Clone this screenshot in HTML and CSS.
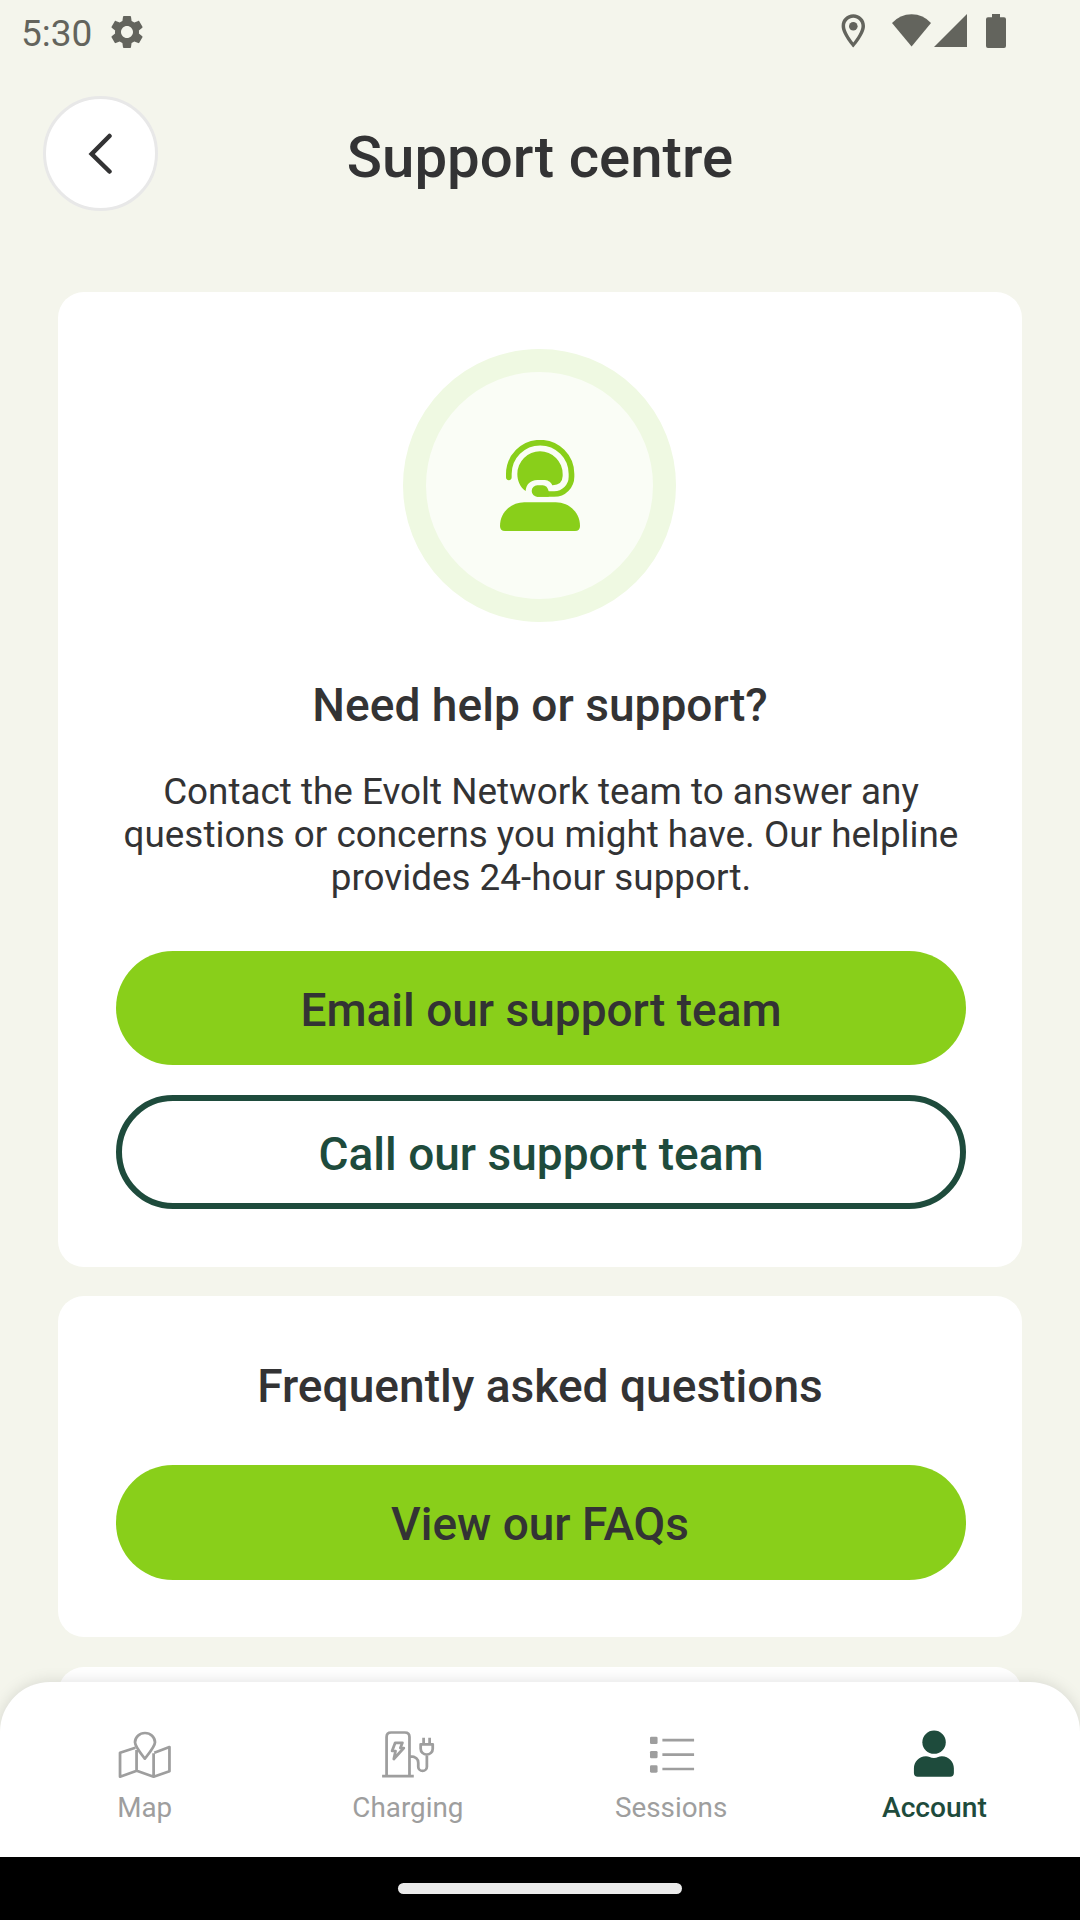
FILE: index.html
```html
<!DOCTYPE html>
<html lang="en">
<head>
<meta charset="utf-8">
<title>Support centre</title>
<link rel="stylesheet" href="styles.css">
</head>
<body>
<div class="status">
  <span class="clock">5:30</span>
  <svg class="gear" viewBox="0 0 24 24"><path d="M19.14 12.94c.04-.3.06-.61.06-.94 0-.32-.02-.64-.07-.94l2.03-1.58c.18-.14.23-.41.12-.61l-1.92-3.32c-.12-.22-.37-.29-.59-.22l-2.39.96c-.5-.38-1.03-.7-1.62-.94l-.36-2.54c-.04-.24-.24-.41-.48-.41h-3.84c-.24 0-.43.17-.47.41l-.36 2.54c-.59.24-1.13.57-1.62.94l-2.39-.96c-.22-.08-.47 0-.59.22L2.74 8.87c-.12.21-.08.47.12.61l2.03 1.58c-.05.3-.09.63-.09.94s.02.64.07.94l-2.03 1.58c-.18.14-.23.41-.12.61l1.92 3.32c.12.22.37.29.59.22l2.39-.96c.5.38 1.03.7 1.62.94l.36 2.54c.05.24.24.41.48.41h3.84c.24 0 .44-.17.47-.41l.36-2.54c.59-.24 1.13-.56 1.62-.94l2.39.96c.22.08.47 0 .59-.22l1.92-3.32c.12-.22.07-.47-.12-.61l-2.01-1.58zM12 15.600c-1.980 0-3.600-1.620-3.600-3.600s1.620-3.600 3.600-3.600 3.600 1.620 3.600 3.600-1.620 3.600-3.600 3.600z"/></svg>
  <svg class="signals" viewBox="840 12 168 38">
    <path fill-rule="evenodd" d="M853.3 14.3C846.7 14.3 841.6 19.4 841.6 26 841.6 34.600 853.3 47.500 853.3 47.500S865 34.600 865 26C865 19.400 859.900 14.300 853.300 14.300ZM853.300 17.700C857.900 17.700 861.500 21.400 861.500 26 861.500 30.800 856.700 38.200 853.300 42.400 850 38.200 845.100 30.800 845.100 26 845.100 21.400 848.700 17.700 853.300 17.700Z"/>
    <circle cx="853.3" cy="26.2" r="4.300"/>
    <path d="M911.600 46.500 892 23Q900 14.200 911.600 14.200T931 23Z"/>
    <path d="M967 14V47H934Z"/>
    <path d="M992 14h8v3.300h4q2 0 2 2V46q0 2-2 2h-16q-2 0-2-2V19.300q0-2 2-2h4Z"/>
  </svg>
</div>
<header class="header">
  <button class="back" aria-label="Back"><svg viewBox="0 0 26 42"><path d="M21.500 3 3.700 21 21.500 38.500"/></svg></button>
  <h1>Support centre</h1>
</header>
<main class="content">
  <section class="card">
    <div class="badge">
      <svg viewBox="60 60 240 273">
        <path class="band" d="M86.500 172V162A94 94 0 0 1 274.500 162V170A52 52 0 0 1 222.500 222H175"/>
        <path d="M172 196H188Q202 196 206 214V230H172A17 17 0 0 1 172 196Z"/>
        <path d="M137 213C120 202 112 182 112 162A68 68 0 0 1 248 162V168Q247 196 217 195.500C211 184 203 180 190 180H172C150 181 138 194 137 213Z"/>
        <path d="M60 318C60 275 95 247 133 247H227C265 247 300 275 300 318Q300 333 285 333H75Q60 333 60 318Z"/>
      </svg>
    </div>
    <h2>Need help or support?</h2>
    <p>Contact the Evolt Network team to answer any questions or concerns you might have. Our helpline provides 24-hour support.</p>
    <button class="btn primary">Email our support team</button>
    <button class="btn outline">Call our support team</button>
  </section>
  <section class="card faq">
    <h2>Frequently asked questions</h2>
    <button class="btn primary">View our FAQs</button>
  </section>
  <section class="card next"></section>
</main>
<nav class="tabs">
  <a class="tab"><svg preserveAspectRatio="none" viewBox="345.600 270 156.800 150"><path d="M396 323 351.500 338V410L400 392.500 449 410 495 394V321L451 338M399.500 330V392M449 340V410M423.500 356C413 342 395 320 395 307A29 28 0 0 1 453 307C453 320 434 342 423.500 356Z"/></svg>Map</a>
  <a class="tab"><svg preserveAspectRatio="none" viewBox="1108.800 270 156.800 150"><path d="M1112 408.500H1204M1125 406V291Q1125 277.500 1138 277.500H1178Q1191.500 277.500 1191.500 291V406M1193 349C1210 349 1217 358 1217 368V380A12.500 12.500 0 0 0 1242 380V346M1224 313H1259V326A17.500 18 0 0 1 1224 326ZM1232.500 293V312M1250 293V312M1150 308.500H1171L1165 324H1175L1146 357 1151 333H1141Z"/></svg>Charging</a>
  <a class="tab"><svg preserveAspectRatio="none" viewBox="304.600 270 156.800 150"><path d="M358 300.500H450M358 344H450M358 387H450"/><g class="solid"><rect x="322" y="290" width="22" height="22" rx="4"/><rect x="322" y="333" width="22" height="22" rx="4"/><rect x="322" y="376" width="22" height="22" rx="4"/></g></svg>Sessions</a>
  <a class="tab active"><svg preserveAspectRatio="none" viewBox="1068.900 270 156.800 150"><g class="solid"><ellipse cx="1147.500" cy="306.500" rx="34" ry="35"/><path d="M1089 385C1089 366 1103 349 1124 349 1132 349 1137 354 1147 354S1162 349 1170 349C1191 349 1205 366 1205 385V399Q1205 410 1194 410H1100Q1089 410 1089 399Z"/></g></svg>Account</a>
</nav>
<div class="system"><span class="handle"></span></div>
</body>
</html>
```
FILE: styles.css
```css
* { box-sizing: border-box; }
body {
  margin: 0;
  height: 1920px;
  display: flex;
  flex-direction: column;
  overflow: hidden;
  background: #f4f5ec;
  color: #333334;
  font-family: Roboto, sans-serif;
}
h1, h2, p { margin: 0; font-weight: 500; text-align: center; }
button { font: inherit; color: inherit; border: 0; padding: 0; }

.status {
  height: 64px;
  padding: 0 72px 0 21px;
  display: flex;
  align-items: center;
  color: #63645d;
  fill: currentColor;
}
.clock { font-size: 37px; line-height: 64px; padding-top: 4px; }
.gear { width: 40px; height: 40px; margin-left: 15px; }
.signals { width: 168px; height: 38px; margin: -2px 0 0 auto; }

.header {
  height: 228px;
  padding: 32px 43px 0;
  display: grid;
  grid-template-columns: 115px 1fr 115px;
  align-items: start;
}
.back {
  width: 115px;
  height: 115px;
  border: 3px solid #e8e8e8;
  border-radius: 50%;
  background: #fff;
  display: grid;
  place-items: center;
}
.back svg { width: 26px; height: 42px; fill: none; stroke: #333334; stroke-width: 4.5; stroke-linecap: round; }
h1 { font-size: 58.2px; line-height: 68px; padding-top: 27px; }

.content {
  flex: 1;
  min-height: 0;
  overflow: hidden;
  padding: 0 58px;
  display: flex;
  flex-direction: column;
  gap: 29px;
}
.card {
  flex: none;
  height: 975px;
  padding: 57px 56px 0 58px;
  border-radius: 26px;
  background: #fff;
  display: flex;
  flex-direction: column;
}
.faq { height: 341px; }
.next { height: 200px; margin-top: 1px; }
.badge {
  width: 273px;
  height: 273px;
  margin-left: 287.4px;
  border: 23px solid #eff9e2;
  border-radius: 50%;
  background: #fafdf6;
  display: grid;
  place-items: center;
}
.badge svg { width: 80px; height: 91px; fill: #89cf1a; }
.badge .band { fill: none; stroke: #89cf1a; stroke-width: 17; stroke-linecap: round; }
h2 { font-size: 46.1px; line-height: 54px; margin: 56px 2px 38px 0; }
p { font-size: 36.85px; line-height: 43px; font-weight: 400; margin: 0 -10px 52px; }
.btn {
  height: 114px;
  border-radius: 57px;
  font-size: 46px;
  font-weight: 500;
  padding-top: 4px;
}
.primary { background: #89cf1a; }
.outline { margin-top: 30px; border: 6px solid #1e4b3c; background: #fff; color: #1e4b3c; }
.faq h2 { margin: 6px 2px 52px 0; }
.faq .btn { height: 115px; padding: 3px 2px 0 0; }

.tabs {
  position: relative;
  height: 175px;
  margin-top: -175px;
  padding: 48px 14px 0 13px;
  border-radius: 50px 50px 0 0;
  background: #fff;
  box-shadow: 0 0 16px rgba(0, 0, 0, .13);
  display: grid;
  grid-template-columns: repeat(4, 1fr);
  color: #9e9e9e;
}
.tab {
  display: flex;
  flex-direction: column;
  align-items: center;
  font-size: 27.8px;
  line-height: 32px;
  gap: 12px;
}
.tab svg { width: 54px; height: 50px; fill: none; stroke: currentColor; stroke-width: 8; stroke-linejoin: round; }
.tab .solid { fill: currentColor; stroke: none; }
.active { color: #1e4b3c; font-weight: 500; font-size: 28.2px; }

.system { position: relative; height: 63px; background: #000; padding-top: 26px; }
.handle { display: block; width: 284px; height: 11px; margin: 0 auto; border-radius: 6px; background: #ebebeb; }
```
